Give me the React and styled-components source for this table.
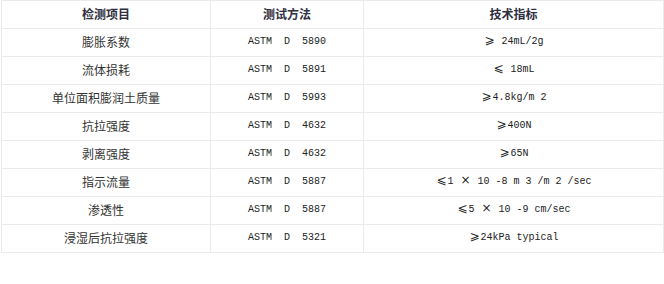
import React from "react";
import styled, { createGlobalStyle } from "styled-components";

const Global = createGlobalStyle`
  html, body { margin: 0; padding: 0; background: #fff; }
  body { font-family: "Noto Sans CJK SC", "Liberation Sans", sans-serif; color: #333; }
`;

const Page = styled.div`
  padding-left: 1px;
`;

const Table = styled.table`
  border-collapse: collapse;
  table-layout: fixed;
  width: 663px;
`;

const Row = styled.tr`
  height: 28px;
`;

const HeadCell = styled.th`
  height: 25px;
  padding: 0 0 2px;
  border: 1px solid #ebebeb;
  font-size: 12px;
  font-weight: 700;
  color: #2f2f3f;
  text-align: center;
  line-height: 14px;
  overflow: hidden;
`;

const Cell = styled.td`
  height: 25px;
  padding: 0 0 2px;
  border: 1px solid #ebebeb;
  text-align: center;
  line-height: 14px;
  font-size: ${(p) => (p.$mono ? "10px" : "12px")};
  font-family: ${(p) =>
    p.$mono
      ? '"Liberation Mono", "Noto Sans CJK SC", monospace'
      : '"Noto Sans CJK SC", "Liberation Sans", sans-serif'};
  color: ${(p) => (p.$mono ? "#222" : "#333")};
  white-space: pre;
  overflow: hidden;
`;

const Wide = styled.span`
  display: inline-block;
  width: 12px;
  font-size: 12px;
  text-align: center;
  font-family: "DejaVu Sans", "Noto Sans CJK SC", sans-serif;
  line-height: 12px;
`;

const GE = () => <Wide>⩾</Wide>;
const LE = () => <Wide>⩽</Wide>;
const X = () => <Wide>×</Wide>;

const rows = [
  ["膨胀系数", "5890", <><GE />{" 24mL/2g"}</>],
  ["流体损耗", "5891", <><LE />{" 18mL"}</>],
  ["单位面积膨润土质量", "5993", <><GE />{"4.8kg/m 2"}</>],
  ["抗拉强度", "4632", <><GE />{"400N"}</>],
  ["剥离强度", "4632", <><GE />{"65N"}</>],
  ["指示流量", "5887", <><LE />{"1 "}<X />{" 10 -8 m 3 /m 2 /sec"}</>],
  ["渗透性", "5887", <><LE />{"5 "}<X />{" 10 -9 cm/sec"}</>],
  ["浸湿后抗拉强度", "5321", <><GE />{"24kPa typical"}</>],
];

export default function App() {
  return (
    <Page>
      <Global />
      <Table>
        <colgroup>
          <col style={{ width: 209 }} />
          <col style={{ width: 153 }} />
          <col style={{ width: 300 }} />
        </colgroup>
        <thead>
          <Row>
            <HeadCell>检测项目</HeadCell>
            <HeadCell>测试方法</HeadCell>
            <HeadCell>技术指标</HeadCell>
          </Row>
        </thead>
        <tbody>
          {rows.map(([name, code, spec], i) => (
            <Row key={i}>
              <Cell>{name}</Cell>
              <Cell $mono>{`ASTM  D  ${code}`}</Cell>
              <Cell $mono>{spec}</Cell>
            </Row>
          ))}
        </tbody>
      </Table>
    </Page>
  );
}
